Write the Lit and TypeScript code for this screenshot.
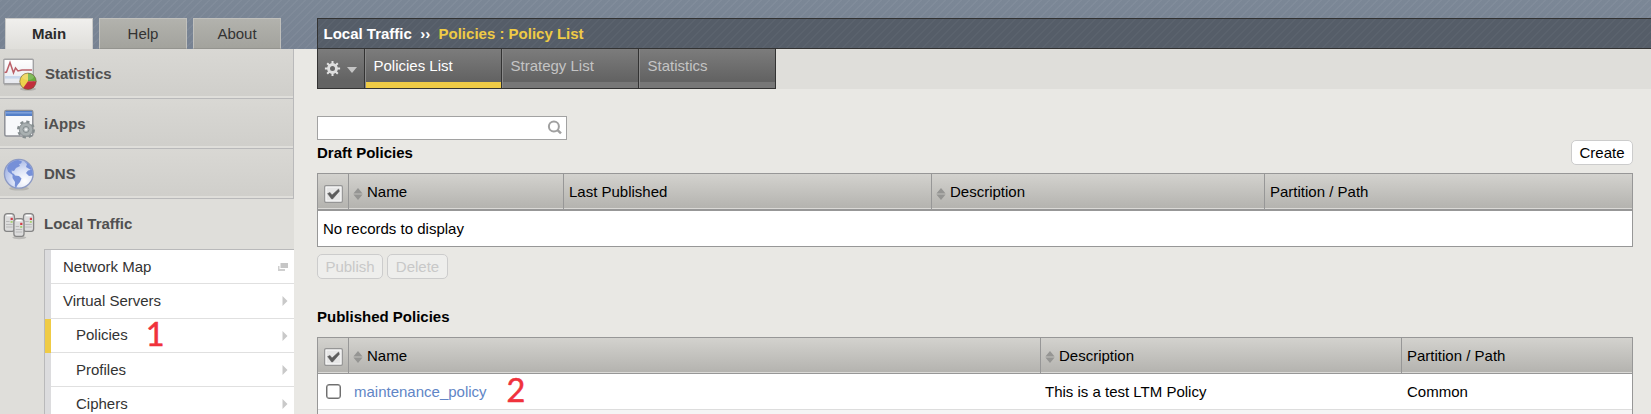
import { LitElement, html, css, svg } from "lit";
import { customElement } from "lit/decorators.js";

const statsIcon = svg`<svg width="38" height="34" viewBox="0 0 38 34">
  <defs>
    <linearGradient id="sg" x1="0" y1="0" x2="0" y2="1"><stop offset="0" stop-color="#fff"/><stop offset="1" stop-color="#e6e8ee"/></linearGradient>
    <clipPath id="pie"><circle cx="25" cy="24.3" r="8.3"/></clipPath>
  </defs>
  <ellipse cx="25" cy="32" rx="8" ry="1.8" fill="#000" opacity=".15"/>
  <path d="M1 27.6 H18" stroke="#000" stroke-opacity=".15" stroke-width="1.6"/>
  <rect x="0.8" y="2.2" width="29.5" height="24.5" rx="1" fill="url(#sg)" stroke="#a2a2a4" stroke-width="1.4"/>
  <rect x="2" y="19" width="27" height="2.6" fill="#c9d7ec"/>
  <path d="M1.5 15.5 L3.5 15 L7 5.5 L10.5 15.8 L12.5 11 L15 14 L19 13 H29" fill="none" stroke="#bb6068" stroke-width="1.5"/>
  <g clip-path="url(#pie)">
    <rect x="16" y="15" width="9" height="19" fill="#ecd24c"/>
    <rect x="25" y="15" width="9" height="9.3" fill="#66ac3a"/>
    <path d="M25 24.3 H34 V34 H18 Z" fill="#c22f3c"/>
    <ellipse cx="25" cy="19.5" rx="6" ry="3.4" fill="#fff" opacity=".18"/>
  </g>
  <circle cx="25" cy="24.3" r="8.2" fill="none" stroke="#6a5a3a" stroke-opacity=".6" stroke-width="1"/>
</svg>`;

const appsIcon = svg`<svg width="38" height="34" viewBox="0 0 38 34">
  <rect x="1.8" y="3.4" width="28" height="25.5" rx="1.5" fill="#f8f9fb" stroke="#8e9096" stroke-width="1.5"/>
  <rect x="2.5" y="4" width="26.6" height="5" fill="#5580c8"/>
  <rect x="2.5" y="5" width="26.6" height="1.6" fill="#7fa0da"/>
  <circle cx="23" cy="22.5" r="7.7" fill="none" stroke="#858d8f" stroke-width="2.6" stroke-dasharray="3.2 2.85"/>
  <circle cx="23" cy="22.5" r="6.7" fill="#a9b0b1" stroke="#8a9193"/>
  <circle cx="23" cy="22.5" r="3" fill="#bcc2c3" stroke="#838b8d" stroke-width="1"/>
  <circle cx="23" cy="22.5" r="1.2" fill="#f1f2f2"/>
</svg>`;

const dnsIcon = svg`<svg width="38" height="34" viewBox="0 0 38 34">
  <defs><radialGradient id="gl" cx=".7" cy=".75" r=".9"><stop offset="0" stop-color="#fff"/><stop offset=".45" stop-color="#d9e1f6"/><stop offset="1" stop-color="#94a7de"/></radialGradient></defs>
  <ellipse cx="16" cy="31.5" rx="10" ry="2" fill="#000" opacity=".13"/>
  <circle cx="15.8" cy="16.8" r="14.4" fill="url(#gl)" stroke="#8c9ac4" stroke-width="1.3"/>
  <path d="M5 8.5 Q9 3.5 15 3 L19 4.5 L18 6.5 L16 7 L17 9 L13 11 L11 14 L8.5 13.5 L9 16 L11 17 L12 18.5 L16 19 L18.5 21.5 L17 25 L14.5 28 L13 31 L11.8 29 L12 25 L9.5 21 L9.5 18 L5 14.5 L4 11 Z" fill="#7690d8"/>
  <path d="M21 4 L26 7 L29 12 L28 13 L23 10 L24 7 Z M29.5 12.5 L30 18.5 L26 19 L23 16 L25 13.5 Z" fill="#7690d8"/>
</svg>`;

const server = (x: number, y: number) => svg`<g transform="translate(${x} ${y})">
  <path d="M.7 16 V4 Q.7 .7 4 .7 H7.5 Q10.8 .7 10.8 4 V16 Q10.8 18.3 8.5 18.3 H3 Q.7 18.3 .7 16 Z" fill="#dcdcdc" stroke="#858585" stroke-width="1.3"/>
  <path d="M3 2.6 H8.5" stroke="#fff" stroke-width="1.3"/>
  <path d="M2.5 8.5 H6 M2.5 11.5 H9 M2.5 14 H9" stroke="#b4b4b4" stroke-width=".9"/>
  <rect x="7" y="4.8" width="2.2" height="2.2" fill="#d13c48"/>
  <rect x="7" y="8" width="2" height="1.8" fill="#a6cf70"/>
</g>`;
const trafficIcon = svg`<svg width="38" height="34" viewBox="0 0 38 34">
  <ellipse cx="16.3" cy="29.6" rx="7" ry="1.6" fill="#000" opacity=".16"/>
  ${server(.6, 5)}${server(19.8, 5)}${server(10.2, 10)}
</svg>`;

const sortIcon = svg`<svg class="sort" width="10" height="12" viewBox="0 0 10 12"><path d="M5 0 L9.6 5.4 H.4 Z M5 12 L9.6 6.6 H.4 Z" fill="#959593"/></svg>`;

const checkAll = svg`<svg class="all" width="19" height="18" viewBox="0 0 19 18">
  <rect x=".75" y=".75" width="17.5" height="16.5" rx="1.2" fill="#e6e6e6" stroke="#959595" stroke-width="1.4"/>
  <rect x="2" y="2" width="15" height="14" fill="none" stroke="#fafafa"/>
  <path d="M3.6 8.6 L6 7.4 L8 10 L14.6 4 L15.4 6.2 L8.6 14 H7.6 Z" fill="#5c5c5c" stroke="#5c5c5c" stroke-width=".5"/>
</svg>`;

const gearIcon = svg`<svg width="17" height="17" viewBox="0 0 17 17">
  <g stroke="#e2e2e2" stroke-width="2"><path d="M8.5 .9 V16.1 M.9 8.5 H16.1 M3.2 3.2 L13.8 13.8 M13.8 3.2 L3.2 13.8"/></g>
  <circle cx="8.5" cy="8.5" r="5.4" fill="#dedede"/><circle cx="8.5" cy="8.5" r="2.5" fill="#686868"/>
</svg>`;

const arrow = svg`<svg width="6" height="10" viewBox="0 0 6 10"><path d="M.5 0 L5.5 5 L.5 10 Z" fill="#c9c9c9"/></svg>`;
const popup = svg`<svg width="10" height="8" viewBox="0 0 10 8"><rect x="0" y="3" width="7" height="5" fill="#cfcfcf"/><rect x="2" y="-.5" width="8.5" height="6" fill="#c6c6c6" stroke="#fff"/></svg>`;

@customElement("app-root")
export class AppRoot extends LitElement {
  static styles = css`
    :host { display: block; height: 414px; overflow: hidden; background: #e9e8e4; font: 15px/18px "Liberation Sans", Arial, sans-serif; color: #000; }
    * { box-sizing: border-box; }
    svg { display: block; flex: none; }
    .page { display: grid; grid-template-columns: 294px 1fr; height: 414px; }
    .top { grid-column: 1 / 3; height: 49px; display: grid; grid-template-columns: 317px 1fr; padding-top: 18px;
      background: repeating-linear-gradient(135deg, rgba(255,255,255,.045) 0 2px, transparent 2px 5.657px), linear-gradient(#7b8796, #778292); }
    .tabs { display: flex; gap: 6px; padding-left: 5px; }
    .tab { width: 88px; height: 31px; border: 1px solid #c0c0bc; border-bottom-color: #94948f; background: linear-gradient(#b2b2ad, #a3a39d); color: #333; text-align: center; line-height: 30px; }
    .tab.on { background: linear-gradient(#f0efed, #dfdeda); border-color: #c9c9c7; border-bottom: 0; font-weight: bold; color: #2b2b2b; }
    .crumb { border: 1px solid #333; border-right: 0; height: 31px; padding-left: 5.5px; line-height: 29px; font-weight: bold; color: #fff; white-space: pre;
      background: repeating-linear-gradient(135deg, rgba(255,255,255,.03) 0 2px, transparent 2px 5.657px), #555d68; }
    .crumb b { color: #efcb45; }
    .side { background: #dfdeda; display: flex; flex-direction: column; height: 365px; overflow: hidden; }
    .item { height: 50px; flex: none; display: flex; align-items: center; padding-left: 3px; gap: 3px; font-weight: bold; color: #505050; }
    .item:first-child { gap: 4px; }
    .item svg { margin-top: 1px; }
    .item.shut { background: linear-gradient(#d9d8d4, #d0cfcb) 0 0 / 100% 47px no-repeat #dfdeda; border-bottom: 1px solid #b9b9ba; border-right: 1px solid #b9b9ba; }
    .sub { margin-left: 44px; border: 1px solid #b9b9ba; border-right: 0; border-bottom: 0; flex: none; }
    .row { display: flex; align-items: center; justify-content: space-between; height: 34px; border-left: 6px solid #dcdcde; padding: 0 6px 0 12px; background: linear-gradient(#e0e0e0, #e0e0e0) 0 100% / 100% 1px no-repeat #fff; color: #333; }
    .row.tall { height: 35px; padding-bottom: 1px; }
    .row.deep { padding-left: 25px; }
    .row.on { border-left-color: #efcb45; }
    .mark { font: 32.5px/30px Lato, sans-serif; color: #f0323c; -webkit-text-stroke: .5px #f0323c; margin-top: -4px; }
    .name { display: flex; align-items: center; height: 32px; }
    .on .name { margin-top: -2px; }
    .on .mark { margin: -3px 0 0 18px; }
    .strip { display: grid; grid-template-columns: 23px 459px 1fr; }
    .strip .fill { height: 40px; background: #dfdeda; }
    .menu { display: flex; height: 40px; border: 1px solid #333; border-top: 0; background: linear-gradient(#7c7c7c, #636363 80%); }
    .gear { width: 46px; display: flex; align-items: center; padding: 0 0 0 6px; gap: 6px; }
    .caret { border: 5px solid transparent; border-top: 6px solid #c4c4c4; border-bottom: 0; margin-top: 2px; }
    .mt { width: 137px; border-left: 1px solid #333; box-shadow: inset 1px 0 #8a8a8a; padding: 8px 0 0 8.5px; color: #c4c4c4; background: linear-gradient(#777, #777) 0 100% / 100% 6px no-repeat; }
    .mt.on { color: #fff; background: linear-gradient(#efcb45, #efcb45) 0 100% / 100% 6px no-repeat; }
    .content { padding: 27px 18px 0 23px; height: 325px; overflow: hidden; }
    .search { width: 250px; height: 24px; border: 1px solid #a2a2a2; background: #fff; display: flex; justify-content: flex-end; padding: 3px 4px; }
    .head { display: flex; justify-content: space-between; height: 33px; }
    h2 { font-size: 15px; line-height: 18px; margin: 4px 0 0; }
    button { font: inherit; height: 25px; width: 62px; padding: 0; border: 1px solid #ccc; border-radius: 5px; background: #fff; color: #000; line-height: 23px; }
    button:disabled { background: #eeeeec; color: #c8c8c8; width: 61px; }
    button:disabled:first-child { width: 66px; }
    .table { border: 1px solid #979797; background: #fff; }
    .th, .td { display: grid; }
    .draft { grid-template-columns: 31px 215px 368px 333px 1fr; }
    .pub { grid-template-columns: 31px 692px 361px 1fr; }
    .th { height: 36px; background: linear-gradient(#d3d2ce, #b5b4b0 33px, #b5b4b0 34px, #dad9d6 34px, #dad9d6 35px, #979797 35px); }
    .th > div { display: flex; align-items: center; gap: 4px; padding: 1px 0 0 5px; height: 35px; border-right: 1px solid #979797; }
    .th > div:last-child { border-right: 0; }
    .th .all { margin: 3px 0 0 1px; }
    .th .sort { margin: 3px 0 0 -1px; }
    .pub.th > div { padding-top: 0; }
    .empty { border-top: 1px solid #979797; height: 36px; padding: 9px 5px 0; }
    .btns { display: flex; gap: 4px; margin-top: 7px; height: 25px; }
    .btns + h2 { margin: 29px 0 11px; }
    .td { height: 36px; border-bottom: 1px solid #ddd; align-items: center; }
    .td > div { padding-left: 5px; display: flex; align-items: center; }
    .td > div:nth-child(3) { padding-left: 4px; }
    .box { width: 15px; height: 15px; border: 1px solid #6f6f6f; border-radius: 3px; margin-left: 2.5px; box-shadow: inset 0 0 0 .5px #777; }
    .link { color: #6185c6; }
    .td .mark { margin-left: 20px; }
    .next { height: 20px; background: #f5f5f5; }
  `;

  render() {
    return html`<div class="page">
      <div class="top">
        <div class="tabs"><div class="tab on">Main</div><div class="tab">Help</div><div class="tab">About</div></div>
        <div class="crumb">Local Traffic  ››  <b>Policies : Policy List</b></div>
      </div>
      <nav class="side">
        <div class="item shut">${statsIcon}<span>Statistics</span></div>
        <div class="item shut">${appsIcon}<span>iApps</span></div>
        <div class="item shut">${dnsIcon}<span>DNS</span></div>
        <div class="item">${trafficIcon}<span>Local Traffic</span></div>
        <div class="sub">
          <div class="row"><span>Network Map</span>${popup}</div>
          <div class="row tall"><span>Virtual Servers</span>${arrow}</div>
          <div class="row deep on"><div class="name"><span>Policies</span><span class="mark">1</span></div>${arrow}</div>
          <div class="row deep"><span>Profiles</span>${arrow}</div>
          <div class="row deep"><span>Ciphers</span>${arrow}</div>
        </div>
      </nav>
      <main>
        <div class="strip"><div></div>
          <div class="menu"><div class="gear">${gearIcon}<i class="caret"></i></div>
            <div class="mt on">Policies List</div><div class="mt">Strategy List</div><div class="mt">Statistics</div></div>
          <div class="fill"></div>
        </div>
        <div class="content">
          <div class="search"><svg width="15" height="15" viewBox="0 0 15 15"><circle cx="6.9" cy="6.4" r="5" fill="none" stroke="#a0a0a0" stroke-width="2"/><path d="M10.3 9.8 L14 13.4" stroke="#a0a0a0" stroke-width="2.4"/></svg></div>
          <div class="head"><h2>Draft Policies</h2><button>Create</button></div>
          <div class="table">
            <div class="th draft"><div>${checkAll}</div><div>${sortIcon}Name</div><div>Last Published</div><div>${sortIcon}Description</div><div>Partition / Path</div></div>
            <div class="empty">No records to display</div>
          </div>
          <div class="btns"><button disabled>Publish</button><button disabled>Delete</button></div>
          <h2>Published Policies</h2>
          <div class="table">
            <div class="th pub"><div>${checkAll}</div><div>${sortIcon}Name</div><div>${sortIcon}Description</div><div>Partition / Path</div></div>
            <div class="td pub"><div><span class="box"></span></div><div><span class="link">maintenance_policy</span><span class="mark">2</span></div><div>This is a test LTM Policy</div><div>Common</div></div>
            <div class="next"></div>
          </div>
        </div>
      </main>
    </div>`;
  }
}
